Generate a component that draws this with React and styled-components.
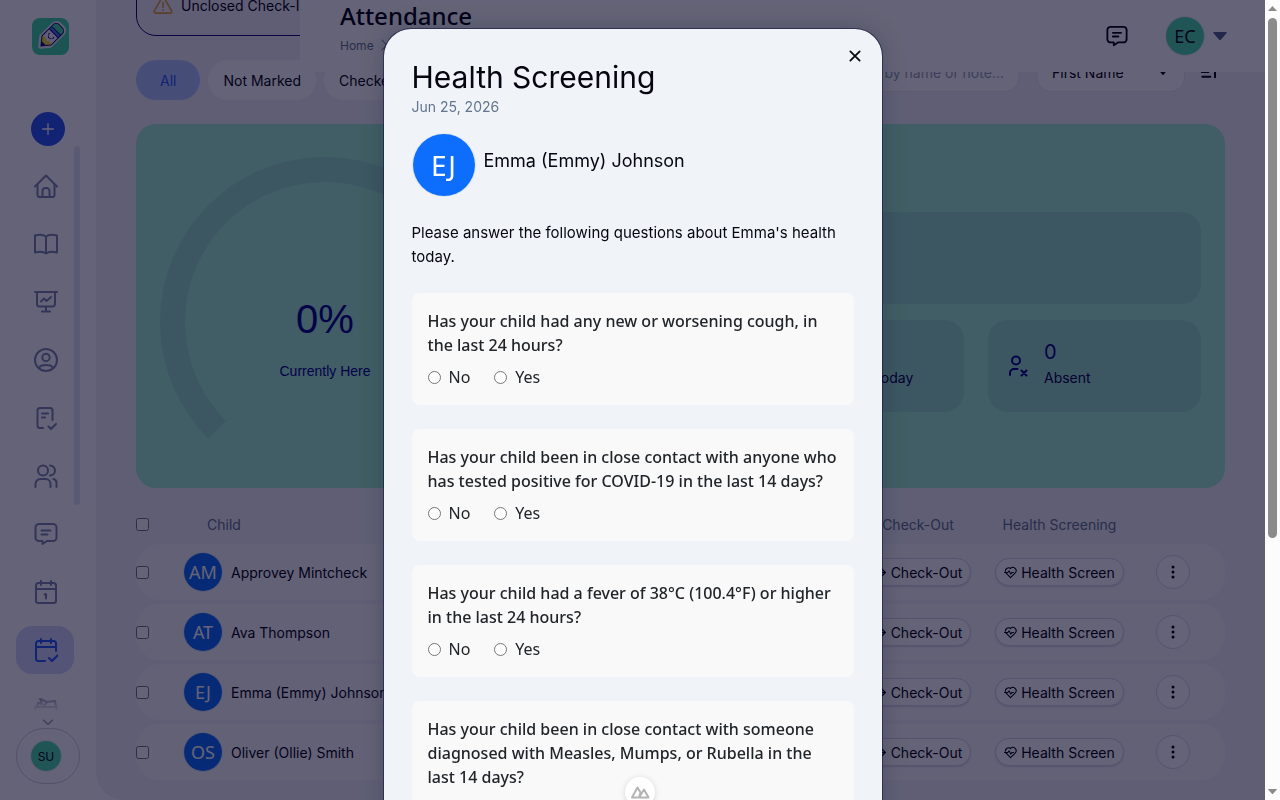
import React from 'react';
import styled, { createGlobalStyle, css } from 'styled-components';

const sans = '"Inter", "Liberation Sans", sans-serif';
const noto = '"Noto Sans", "Open Sans", sans-serif';
const ink = '#05060f';
const muted = '#64748b';

const GlobalStyle = createGlobalStyle`
  *, *::before, *::after { box-sizing: border-box; }
  body { margin: 0; font-family: ${sans}; font-size: 14px; color: ${ink}; background: #fff; }
  button, input, select { font: inherit; color: inherit; }
  button { padding: 0; border: 0; background: none; cursor: pointer; }
  h1, h2, p, ul, fieldset { margin: 0; padding: 0; border: 0; }
  svg { display: block; }
`;

/* ---------- shell ---------- */
const Shell = styled.div`
  display: flex;
  height: 100vh;
  overflow: hidden;
`;

const Sidebar = styled.aside`
  flex: 0 0 96px;
  display: flex;
  flex-direction: column;
  align-items: center;
  padding: 18px 16px 16px;
  background: #fff;
`;

const LogoLink = styled.a`
  display: flex;
  margin: 0 0 57px 4px;
`;

const AddButton = styled.button`
  flex: none;
  display: grid;
  place-items: center;
  width: 34px;
  height: 34px;
  border-radius: 50%;
  background: #2a5bf6;
  color: #fff;
`;

const NavScroller = styled.nav`
  align-self: stretch;
  flex: 1;
  display: flex;
  align-items: flex-start;
  min-height: 0;
  overflow: hidden;
  mask-image: linear-gradient(#000 calc(100% - 22px), transparent calc(100% - 4px));
`;

const NavList = styled.ul`
  flex: 0 0 58px;
  display: flex;
  flex-direction: column;
  gap: 10px;
  padding-top: 16px;
  list-style: none;
`;

const NavItem = styled.a`
  display: grid;
  place-items: center;
  height: 48px;
  padding-left: 2px;
  border-radius: 16px;
  color: ${p => (p.$active ? '#2a5bf6' : '#7c89ac')};
  background: ${p => (p.$active ? '#d0d8fb' : 'transparent')};
`;

const NavThumb = styled.span`
  flex: 0 0 6px;
  height: 359px;
  border-radius: 3px;
  background: #e3e7f6;
`;

const MoreHint = styled.div`
  height: 12px;
  display: flex;
  align-items: center;
  color: #3f4a66;
`;

const UserBox = styled.button`
  flex: none;
  display: flex;
  align-items: center;
  align-self: stretch;
  height: 56px;
  padding-left: 13px;
  border: 1px solid #cdd0de;
  border-radius: 28px;
`;

const Avatar = styled.span`
  flex: none;
  display: grid;
  place-items: center;
  width: ${p => p.$size}px;
  height: ${p => p.$size}px;
  border: 1px solid rgba(120, 140, 190, 0.15);
  border-radius: 50%;
  font-family: ${p => (p.$plain ? sans : noto)};
  font-size: ${p => p.$font}px;
  color: ${p => (p.$mint ? ink : '#fff')};
  background: ${p => (p.$mint ? '#4fdcab' : '#0d6efd')} padding-box;
`;

const Main = styled.main`
  position: relative;
  flex: 1;
  min-width: 0;
  padding: 0 40px;
  overflow: hidden;
  background: #f0f2f9;
  border-bottom-left-radius: 28px;
`;

/* ---------- header over the scrolled content ---------- */
const Header = styled.header`
  position: absolute;
  z-index: 1;
  top: 0;
  left: 204px;
  right: 0;
  height: 72px;
  display: flex;
  justify-content: space-between;
  padding: 0 38px 0 40px;
  background: #fff;
`;

const PageTitle = styled.h1`
  font-family: ${noto};
  font-size: 24px;
  font-weight: 500;
  line-height: 32px;
`;

const Crumbs = styled.nav`
  display: flex;
  align-items: center;
  gap: 4px;
  height: 26px;
  font-size: 12px;
  a { color: ${muted}; text-decoration: none; }
  svg { color: ${muted}; }
`;

const HeaderTools = styled.div`
  display: flex;
  align-items: center;
  gap: 37px;
`;

const Profile = styled.button`
  display: flex;
  align-items: center;
  gap: 8px;
  color: #56658f;
`;

/* ---------- toolbar ---------- */
const Banner = styled.div`
  display: flex;
  align-items: center;
  gap: 8px;
  height: 62px;
  margin-top: -26px;
  padding: 0 16px;
  border: 1px solid #0b0b6e;
  border-radius: 20px;
`;

const Toolbar = styled.div`
  display: flex;
  justify-content: space-between;
  margin: 16px 0 24px;
`;

const Chips = styled.div`
  display: flex;
  gap: 8px;
  padding-top: 8px;
`;

const Chip = styled.button`
  height: 40px;
  padding: 0 ${p => (p.$active ? 24 : 15)}px;
  border-radius: 20px;
  white-space: nowrap;
  color: ${p => (p.$active ? '#2a5bf6' : ink)};
  background: ${p => (p.$active ? '#b0c8ff' : '#fff')};
`;

const Filters = styled.div`
  display: flex;
  align-items: flex-start;
  gap: 18px;
`;

const field = css`
  height: 40px;
  border: 1px solid #e6e9f4;
  border-radius: 14px;
  background: #fff;
`;

const Search = styled.input`
  ${field}
  width: 198px;
  padding: 0 12px;
  &::placeholder { color: #94a3b8; opacity: 1; }
`;

const SelectWrap = styled.div`
  display: flex;
  align-items: center;
  select { ${field} width: 148px; padding: 0 14px; appearance: none; }
  svg { margin-left: -26px; margin-right: 18px; pointer-events: none; }
`;

const SortButton = styled.button`
  display: grid;
  place-items: center;
  height: 40px;
  padding-right: 8px;
  margin-left: -2px;
`;

/* ---------- summary ---------- */
const Summary = styled.section`
  display: flex;
  gap: 24px;
  height: 364px;
  padding: 24px;
  border-radius: 20px;
  background: #a2f0d0;
`;

const Gauge = styled.svg`
  flex: 0 0 330px;
  width: 330px;
  height: 330px;
  margin-top: 9px;
  font-family: "Liberation Sans", sans-serif;
`;

const Stats = styled.div`
  flex: 1;
  display: grid;
  grid-template-columns: repeat(3, 1fr);
  grid-auto-rows: 92px;
  align-content: center;
  gap: 16px 24px;
  padding-top: 12px;
`;

const Stat = styled.div`
  grid-column: ${p => (p.$wide ? '1 / -1' : 'auto')};
  display: flex;
  align-items: center;
  gap: 14px;
  padding: 0 18px;
  border-radius: 20px;
  color: #06068a;
  background: #96dfc8;
`;

const StatText = styled.div`
  display: flex;
  flex-direction: column;
  padding-bottom: 4px;
  strong { font-size: 20px; font-weight: 400; line-height: 28px; }
  span { line-height: 24px; color: #05054a; }
`;

/* ---------- table ---------- */
const Table = styled.table`
  width: 100%;
  margin-top: 16px;
  table-layout: fixed;
  border-collapse: separate;
  border-spacing: 0 4px;
`;

const Th = styled.th`
  height: 32px;
  padding: 0 0 0 ${p => p.$indent || 0}px;
  font-weight: 400;
  text-align: ${p => (p.$center ? 'center' : 'left')};
  color: ${muted};
`;

const Td = styled.td`
  height: 56px;
  padding: 0 0 0 ${p => p.$indent || 0}px;
  text-align: ${p => (p.$center ? 'center' : 'left')};
  background: #f9fafd;
  &:first-child { border-radius: 24px 0 0 24px; }
  &:last-child { border-radius: 0 24px 24px 0; }
`;

const Tick = styled.input`
  display: block;
  width: 13px;
  height: 13px;
  margin: 0;
`;

const Person = styled.div`
  display: flex;
  align-items: center;
  gap: 8px;
  white-space: nowrap;
`;

const Pill = styled.button`
  display: inline-flex;
  align-items: center;
  gap: 4px;
  height: 28px;
  padding: 0 8px;
  border: 1px solid #d5d6ea;
  border-radius: 14px;
  white-space: nowrap;
  background: #fff;
  box-shadow: 0 1px 2px rgba(20, 20, 80, 0.15);
`;

const DotsButton = styled.button`
  display: grid;
  place-items: center;
  width: 34px;
  height: 34px;
  border: 1px solid #d5d6ea;
  border-radius: 50%;
  background: #fff;
`;

/* ---------- window scrollbar ---------- */
const ScrollTrack = styled.div`
  position: relative;
  z-index: 3;
  flex: 0 0 15px;
  display: flex;
  flex-direction: column;
  align-items: center;
  padding: 6px 0;
  background: #fcfcfc;
  color: #8b8b8b;
`;

const ScrollThumb = styled.div`
  width: 9px;
  height: 66%;
  margin: 7px 0 auto;
  border-radius: 5px;
  background: #8b8b8b;
`;

/* ---------- dialog ---------- */
const Backdrop = styled.div`
  position: fixed;
  z-index: 2;
  inset: 0 15px 0 0;
  display: flex;
  justify-content: center;
  align-items: flex-start;
  padding-top: 28px;
  overflow: hidden;
  background: rgba(4, 0, 33, 0.61);
`;

const Dialog = styled.section`
  display: flex;
  flex-direction: column;
  width: 500px;
  padding: 28px;
  border: 1px solid rgba(10, 10, 55, 0.5);
  border-radius: 28px;
  background: #f0f4f9 padding-box;
  box-shadow: 0 0 24px rgba(0, 20, 40, 0.2);
`;

const DialogHead = styled.div`
  position: relative;
  display: flex;
  flex-direction: column;
  h2 { font-size: 30px; font-weight: 400; line-height: 40px; }
  p { font-size: 14px; line-height: 20px; color: ${muted}; }
`;

const CloseButton = styled.button`
  position: absolute;
  top: -9px;
  right: -9px;
  display: grid;
  place-items: center;
  width: 16px;
  height: 16px;
`;

const Subject = styled.div`
  display: flex;
  gap: 8px;
  margin: 16px 0 24px;
  font-size: 18px;
  line-height: 56px;
`;

const Intro = styled.p`
  font-size: 15px;
  line-height: 24px;
`;

const Question = styled.fieldset`
  min-width: 0;
  margin-top: 24px;
  padding: 16px;
  border-radius: 8px;
  font-family: ${noto};
  font-size: 16px;
  line-height: 24px;
  color: #212529;
  background: #f9f9f9;
  legend { float: left; width: 100%; padding: 0; margin-bottom: 8px; font-weight: 500; }
`;

const Choices = styled.div`
  clear: both;
  display: flex;
  gap: 24px;
  label { display: flex; align-items: center; gap: 8px; }
  input { width: 13px; height: 13px; margin: 0; }
`;

const NuxtBadge = styled.button`
  position: fixed;
  z-index: 4;
  left: 50%;
  bottom: -7px;
  display: grid;
  place-items: center;
  width: 30px;
  height: 30px;
  margin-left: -15px;
  border-radius: 15px;
  background: #fff;
  box-shadow: 0 1px 6px rgba(0, 0, 0, 0.15);
`;

/* ---------- drawings ---------- */
const Line = ({ size = 24, width = 2, children }) => (
  <svg width={size} height={size} viewBox="0 0 24 24" fill="none" stroke="currentColor" strokeWidth={width} strokeLinecap="round" strokeLinejoin="round" aria-hidden="true">{children}</svg>
);

const chat = <><path d="M5 2h14a3.5 3.500 0 0 1 3.500 3.500v10A3.500 3.500 0 0 1 19 19h-6l-4.500 3v-3H5A3.500 3.500 0 0 1 1.500 15.500v-10A3.500 3.500 0 0 1 5 2z" /><path d="M7.500 8.500h9M7.500 12.500h6" /></>;
const calendar = <path d="M2 9h20M7 1v4M17 1v4" />;

const navIcons = [
  ['Home', <><path d="M1 12.500 12 1.500l11 11" /><path d="M3.500 10.500V21a2 2 0 0 0 2 2h13a2 2 0 0 0 2-2V10.500" /><path d="M8.500 23v-6a3 3 0 0 1 3-3h1a3 3 0 0 1 3 3v6" /></>],
  ['Learning', <path d="M12 4.500C9.500 2.500 5 2.500 1 3.500v17c4-1 8.500-1 11 1 2.500-2 7-2 11-1v-17c-4-1-8.500-1-11 1zm0 0v17" />],
  ['Reports', <><path d="M1 2h22M3 2v12a2.500 2.500 0 0 0 2.500 2.500h13A2.500 2.500 0 0 0 21 14V2M12 17v4.500M8 21.500h8" /><path d="m7 11.500 3-3 2.500 2.500L17 7" /></>],
  ['Profile', <><circle cx="12" cy="12" r="11" /><circle cx="12" cy="9.500" r="3.700" /><path d="M5.500 19.500c1-3.300 12-3.300 13 0" /></>],
  ['Forms', <><path d="M9 22H6a2.500 2.500 0 0 1-2.500-2.500v-15A2.500 2.500 0 0 1 6 2h10a2.500 2.500 0 0 1 2.500 2.500V14" /><path d="M8 7.500h6M8 11.500h3M14.500 20.500l2.500 2.500 5-5" /></>],
  ['Families', <><circle cx="9" cy="6.500" r="5" /><path d="M16 1.500a5 5 0 0 1 0 10M1.500 23v-3a5 5 0 0 1 5-5h5a5 5 0 0 1 5 5v3M19.500 15a4 4 0 0 1 3 4v4" /></>],
  ['Messages', chat],
  ['Calendar', <><rect x="2" y="3" width="20" height="20" rx="2.500" />{calendar}<path d="m10.500 14.500 1.500-.5v4.500" /></>],
  ['Attendance', <><path d="M11 23H4.500A2.500 2.500 0 0 1 2 20.500v-15A2.500 2.500 0 0 1 4.500 3h15A2.500 2.500 0 0 1 22 5.500V13" />{calendar}<path d="m15 20 3 3 5.500-5.500" /></>],
  ['Meals', <><path d="M1 11h22c0 6-4 10-8 10H9c-4 0-8-4-8-10z" /><path d="m3 11 1-4 4 1-2-5 7 3 8-1 1 6M9 11l4-5" /></>],
];

const Logo = () => (
  <svg width="37" height="37" viewBox="0 0 37 37" role="img" aria-label="Home">
    <rect width="37" height="37" rx="8" fill="#43d9a3" />
    <g transform="rotate(45 18.500 18.500)">
      <path d="M12 7.500a4 4 0 0 1 4-4h5a4 4 0 0 1 4 4V25l-6.500 8L12 25z" fill="#f4f0ff" stroke="#f4f0ff" strokeWidth="4" strokeLinejoin="round" />
      <path d="M12 8a4 4 0 0 1 4-4h5a4 4 0 0 1 4 4v3H12z" fill="#43d9a3" />
      <path d="M12 10.500h13v3.500H12z" fill="#3c7bf5" />
      <path d="m12 24 3-1.500 3.500 1.500 3.500-1.500 3 1.500-6.500 8z" fill="#f5dc3c" />
      <path d="m15.300 28 3.200 4 3.200-4z" fill="#10106b" />
      <path d="M12 8a4 4 0 0 1 4-4h5a4 4 0 0 1 4 4v16l-6.500 8L12 24zM12 10.500h13M12 14h13" fill="none" stroke="#10106b" strokeWidth="1" />
      <path d="M15.500 17v1.200M21.500 17v1.200M16.500 19.500c1 1.500 3 1.500 4 0" fill="none" stroke="#10106b" strokeWidth="1" strokeLinecap="round" />
    </g>
  </svg>
);

const HeartPulse = () => (
  <Line size={13}><path d="M3.500 12.500 12 21.500l8.500-8.500a6 6 0 0 0-8.500-8.500 6 6 0 0 0-9.500 5M1 12h6l2.500-3 3 6 2-3h3" /></Line>
);

const Dots = () => (
  <svg width="4" height="14" viewBox="0 0 4 14" fill="currentColor" aria-hidden="true"><circle cx="2" cy="2" r="1.500" /><circle cx="2" cy="7" r="1.500" /><circle cx="2" cy="12" r="1.500" /></svg>
);

const Caret = ({ w, h, up }) => (
  <svg width={w} height={h} viewBox="0 0 14 8" preserveAspectRatio="none" fill="currentColor" aria-hidden="true"><path d={up ? 'M0 8 7 0l7 8z' : 'M1 0h12q1.500 0 .5 1.200L8 7.500q-1 1-2 0L.5 1.200Q-.5 0 1 0z'} /></svg>
);

const UserX = () => (
  <Line size={24}><circle cx="10" cy="6.500" r="4" /><path d="M4 21v-2a4 4 0 0 1 4-4h3.500M15.500 16.500l5 5M20.500 16.500l-5 5" /></Line>
);

/* ---------- data ---------- */
const children = [
  ['AM', 'Approvey Mintcheck'],
  ['AT', 'Ava Thompson'],
  ['EJ', 'Emma (Emmy) Johnson'],
  ['OS', 'Oliver (Ollie) Smith'],
];

const questions = [
  'Has your child had any new or worsening cough, in the last 24 hours?',
  'Has your child been in close contact with anyone who has tested positive for COVID-19 in the last 14 days?',
  'Has your child had a fever of 38°C (100.4°F) or higher in the last 24 hours?',
  'Has your child been in close contact with someone diagnosed with Measles, Mumps, or Rubella in the last 14 days?',
];

export default function App() {
  return (
    <Shell>
      <GlobalStyle />
      <Sidebar>
        <LogoLink href="#home"><Logo /></LogoLink>
        <AddButton aria-label="Add"><Line size={16}><path d="M12 4v16M4 12h16" /></Line></AddButton>
        <NavScroller>
          <NavList>
            {navIcons.map(([name, art]) => (
              <li key={name}><NavItem href={`#${name.toLowerCase()}`} aria-label={name} $active={name === 'Attendance'}><Line>{art}</Line></NavItem></li>
            ))}
          </NavList>
          <NavThumb />
        </NavScroller>
        <MoreHint><Line size={12}><path d="m3 8 9 9 9-9" /></Line></MoreHint>
        <UserBox aria-label="Account"><Avatar $size={32} $font={12} $mint $plain>SU</Avatar></UserBox>
      </Sidebar>

      <Main>
        <Header>
          <div>
            <PageTitle>Attendance</PageTitle>
            <Crumbs><a href="#home">Home</a><Line size={12}><path d="m8 2 9 10-9 10" /></Line></Crumbs>
          </div>
          <HeaderTools>
            <button aria-label="Messages"><Line size={22}>{chat}</Line></button>
            <Profile aria-label="Profile menu"><Avatar $size={40} $font={18} $mint>EC</Avatar><Caret w={14} h={8} /></Profile>
          </HeaderTools>
        </Header>

        <Banner>
          <svg width="20" height="18" viewBox="0 0 24 22" fill="none" stroke="#e0a63c" strokeWidth="2" strokeLinejoin="round" strokeLinecap="round" aria-hidden="true"><path d="M10.500 2.500q1.500-2 3 0l9 15.500q1 2.500-1.500 3H3q-2.500-.5-1.500-3zM12 8v6M12 17v.5" /></svg>
          Unclosed Check-Ins
        </Banner>

        <Toolbar>
          <Chips>
            <Chip $active>All</Chip>
            <Chip>Not Marked</Chip>
            <Chip>Checked In</Chip>
          </Chips>
          <Filters>
            <Search aria-label="Search" placeholder="Search by name or note..." />
            <SelectWrap>
              <select aria-label="Sort by" defaultValue="First Name"><option>First Name</option><option>Last Name</option></select>
              <Caret w={8} h={5} />
            </SelectWrap>
            <SortButton aria-label="Sort direction"><Line size={16} width={3}><path d="M1 4h8M1 12h10M2 19h12M21 20V4" /></Line></SortButton>
          </Filters>
        </Toolbar>

        <Summary>
          <Gauge viewBox="0 0 330 330" role="img" aria-label="0% currently here">
            <path d="M57.200 272.800a152.500 152.500 0 1 1 215.600 0" fill="none" stroke="#96dfc8" strokeWidth="25" />
            <text x="165" y="176" textAnchor="middle" fontSize="40" fill="#06068a">0%</text>
            <text x="165" y="219" textAnchor="middle" fontSize="14" fill="#06068a">Currently Here</text>
          </Gauge>
          <Stats>
            <Stat $wide />
            <Stat />
            <Stat><UserX /><StatText><strong>0</strong><span>Expected Today</span></StatText></Stat>
            <Stat><UserX /><StatText><strong>0</strong><span>Absent</span></StatText></Stat>
          </Stats>
        </Summary>

        <Table>
          <colgroup>
            <col style={{ width: 47 }} /><col /><col style={{ width: 132 }} /><col style={{ width: 151 }} /><col style={{ width: 90 }} />
          </colgroup>
          <thead>
            <tr>
              <Th><Tick type="checkbox" aria-label="Select all" /></Th>
              <Th $indent={24}>Child</Th>
              <Th $center>Check-Out</Th>
              <Th $center>Health Screening</Th>
              <Th aria-label="Actions" />
            </tr>
          </thead>
          <tbody>
            {children.map(([initials, name]) => (
              <tr key={name}>
                <Td><Tick type="checkbox" aria-label={`Select ${name}`} /></Td>
                <Td><Person><Avatar $size={40} $font={18}>{initials}</Avatar>{name}</Person></Td>
                <Td $center><Pill><Line size={13}><path d="M3 12h18M15 6l6 6-6 6" /></Line>Check-Out</Pill></Td>
                <Td $center><Pill><HeartPulse />Health Screen</Pill></Td>
                <Td $indent={21}><DotsButton aria-label={`More for ${name}`}><Dots /></DotsButton></Td>
              </tr>
            ))}
          </tbody>
        </Table>
      </Main>

      <ScrollTrack aria-hidden="true">
        <Caret w={9} h={5} up />
        <ScrollThumb />
        <Caret w={9} h={5} />
      </ScrollTrack>

      <Backdrop>
        <Dialog role="dialog" aria-modal="true" aria-labelledby="dialog-title">
          <DialogHead>
            <h2 id="dialog-title">Health Screening</h2>
            <p>Jun 25, 2026</p>
            <CloseButton aria-label="Close"><Line size={14} width={3}><path d="m4 4 16 16M20 4 4 20" /></Line></CloseButton>
          </DialogHead>
          <Subject><Avatar $size={64} $font={28}>EJ</Avatar>Emma (Emmy) Johnson</Subject>
          <Intro>Please answer the following questions about Emma's health today.</Intro>
          {questions.map((q, i) => (
            <Question key={q}>
              <legend>{q}</legend>
              <Choices>
                <label><input type="radio" name={`q${i}`} />No</label>
                <label><input type="radio" name={`q${i}`} />Yes</label>
              </Choices>
            </Question>
          ))}
        </Dialog>
      </Backdrop>

      <NuxtBadge aria-label="Developer tools">
        <svg width="20" height="14" viewBox="0 0 20 14" fill="none" stroke="#b4b4b4" strokeWidth="2" strokeLinejoin="round" aria-hidden="true"><path d="M9 12.500H2L7.500 2.500l3 5zM9 12.500l5-8 4.500 8H9" /></svg>
      </NuxtBadge>
    </Shell>
  );
}
